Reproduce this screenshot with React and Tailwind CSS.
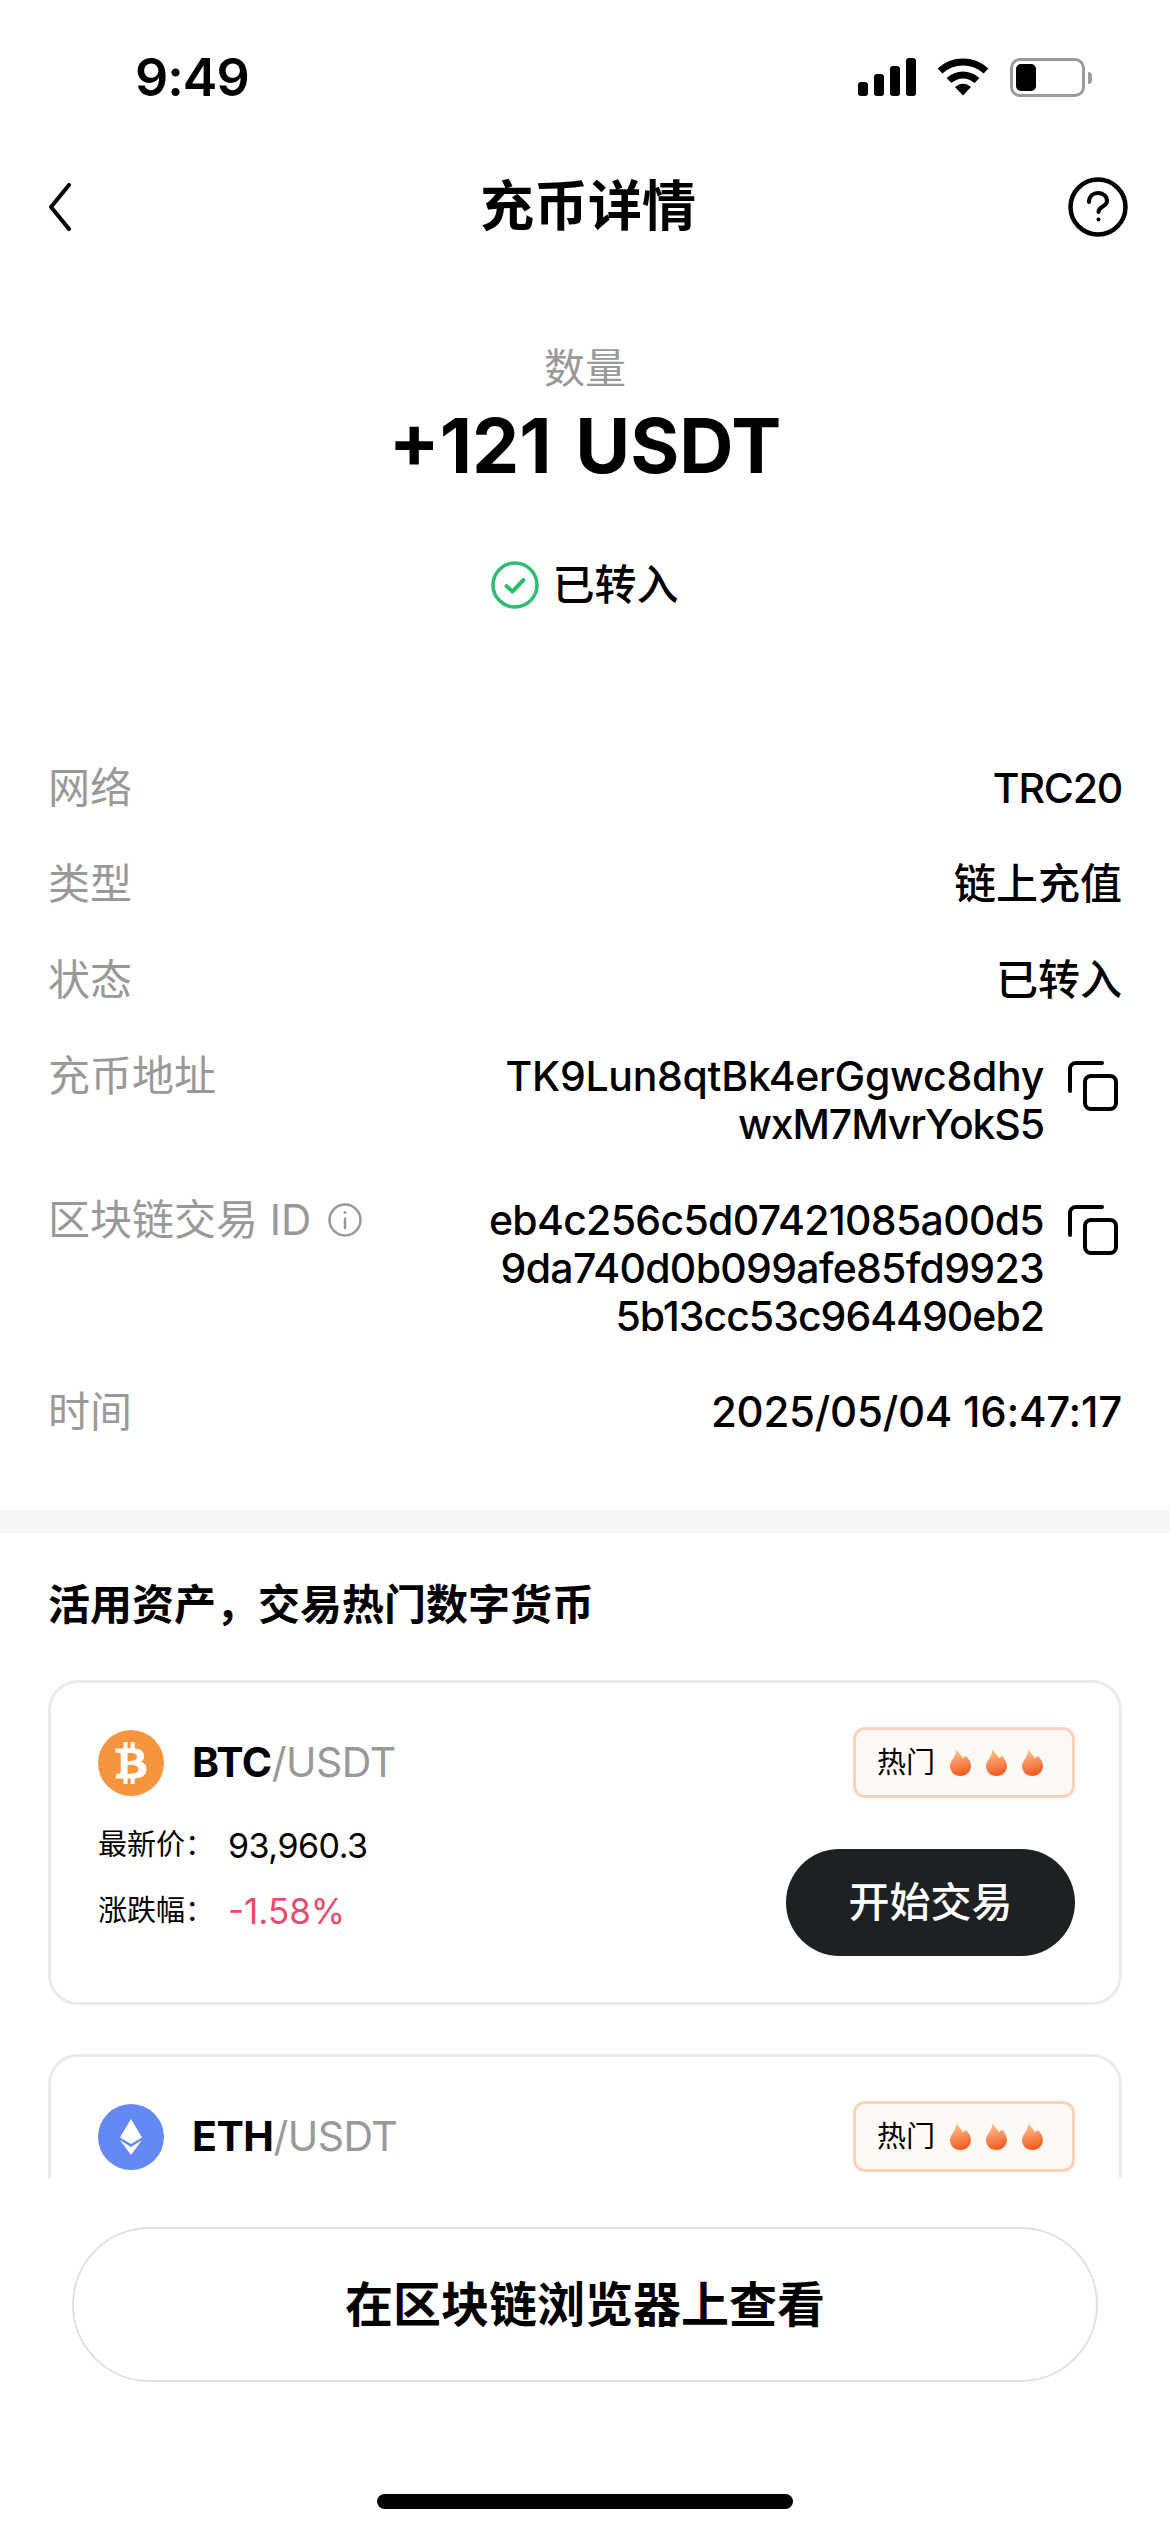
import { FaBtc } from "react-icons/fa";

const SANS = "font-['Inter','Noto_Sans_CJK_SC',sans-serif]";

function StatusBar() {
  return (
    <div className="flex h-[156px] items-start justify-between pt-[52px] pl-[135px] pr-[78px]">
      <span className="text-[52px] font-semibold leading-[52px] tracking-[-1px]">9:49</span>
      <div className="flex items-start pt-[6px]">
        <svg width="60" height="38" viewBox="0 0 60 38" className="mr-[20px]">
          <rect x="1" y="24" width="10" height="14" rx="3" />
          <rect x="17" y="16" width="10" height="22" rx="3" />
          <rect x="33" y="8" width="10" height="30" rx="3" />
          <rect x="49" y="0" width="10" height="38" rx="3" />
        </svg>
        <svg width="52" height="38" viewBox="0 0 52 38" className="mr-[21px]">
          <path d="M3 13 C16 1 36 1 49 13" fill="none" stroke="#000" strokeWidth="7" />
          <path d="M12 22.5 C20 15 32 15 40 22.5" fill="none" stroke="#000" strokeWidth="7" />
          <path d="M18 29 C23 24.500 29 24.500 34 29 L26 37.500 Z" />
        </svg>
        <div className="flex items-center">
          <div className="flex h-[39px] w-[75px] items-center rounded-[10px] border-[3px] border-[#9b9b9b] pl-[3px]">
            <div className="h-[27px] w-[20px] rounded-[5px] bg-black" />
          </div>
          <div className="ml-[3px] h-[12px] w-[4px] rounded-r-full bg-[#9b9b9b]" />
        </div>
      </div>
    </div>
  );
}

function NavBar() {
  return (
    <div className="flex h-[102px] items-center pl-[48px] pr-[42px]">
      <div className="flex-1">
        <svg width="24" height="48" viewBox="0 0 24 48" fill="none" stroke="#000" strokeWidth="4" strokeLinecap="round" strokeLinejoin="round">
          <path d="M21 2 L3 24 L21 46" />
        </svg>
      </div>
      <h1 className="text-[54px] font-bold leading-none">充币详情</h1>
      <div className="flex flex-1 justify-end">
        <svg width="60" height="60" viewBox="0 0 60 60" fill="none" stroke="#000" strokeWidth="4.500" strokeLinecap="round">
          <circle cx="30" cy="30" r="27.500" />
          <path d="M21 25 C21 13 39 13.500 39 24 C39 30 30.500 29 30.500 35" strokeWidth="4" />
          <circle cx="30.500" cy="42.500" r="2" fill="#000" stroke="none" />
        </svg>
      </div>
    </div>
  );
}

function Summary() {
  return (
    <div className="flex flex-col items-center pt-[84px]">
      <div className="text-[41px] leading-[52px] text-[#999999]">数量</div>
      <div className="mt-[12px] text-[75px] font-bold leading-[80px] [word-spacing:6px]">+121 USDT</div>
      <div className="mt-[75px] flex items-center">
        <svg width="48" height="48" viewBox="0 0 48 48" fill="none" stroke="#2dbd6e" strokeWidth="3.500" strokeLinecap="round" strokeLinejoin="round">
          <circle cx="24" cy="24" r="22" />
          <path d="M15.500 25 L21.500 30.500 L32.500 19" strokeWidth="4" />
        </svg>
        <span className="ml-[13px] text-[42px] font-medium leading-[48px]">已转入</span>
      </div>
    </div>
  );
}

function CopyIcon() {
  return (
    <svg width="50" height="50" viewBox="0 0 50 50" fill="none" stroke="#000" strokeWidth="4" strokeLinecap="round" strokeLinejoin="round" className="mt-[9px] mr-[4px] ml-[24px] shrink-0">
      <path d="M34 2 H8 C4.500 2 2 4.500 2 8 V30" />
      <rect x="17" y="15" width="31" height="33" rx="6" />
    </svg>
  );
}

function InfoRow({ label, children }) {
  return (
    <div className="flex items-start justify-between">
      <div className="flex items-center text-[42px] leading-[48px] text-[#999999]">{label}</div>
      <div className="flex items-start text-right text-[42px] font-medium leading-[48px] whitespace-nowrap">{children}</div>
    </div>
  );
}

function Details() {
  return (
    <div className="mt-[155px] flex flex-col gap-[48px] px-[48px]">
      <InfoRow label="网络"><span className="text-[41px] tracking-[-1.2px]">TRC20</span></InfoRow>
      <InfoRow label="类型">链上充值</InfoRow>
      <InfoRow label="状态">已转入</InfoRow>
      <InfoRow label="充币地址">
        <div className="text-[41px] tracking-[-0.3px]">
          <div>TK9Lun8qtBk4erGgwc8dhy</div>
          <div className="tracking-[-1.1px]">wxM7MvrYokS5</div>
        </div>
        <CopyIcon />
      </InfoRow>
      <InfoRow
        label={
          <>
            区块链交易 ID
            <svg width="36" height="36" viewBox="0 0 36 36" fill="none" stroke="#999999" strokeWidth="2.500" strokeLinecap="round" className="ml-[16px]">
              <circle cx="18" cy="18" r="15.500" />
              <path d="M18 16.500 V26" />
              <circle cx="18" cy="10.500" r="1.500" fill="#999999" stroke="none" />
            </svg>
          </>
        }
      >
        <div className="text-[41px] tracking-[-0.7px]">
          <div>eb4c256c5d07421085a00d5</div>
          <div>9da740d0b099afe85fd9923</div>
          <div className="tracking-[-1px]">5b13cc53c964490eb2</div>
        </div>
        <CopyIcon />
      </InfoRow>
      <InfoRow label="时间"><span className="tracking-[-0.25px]">2025/05/04 16:47:17</span></InfoRow>
    </div>
  );
}

function Flame() {
  return (
    <svg width="21" height="27" viewBox="0 0 21 27">
      <defs>
        <linearGradient id="flameFill" x1="0.4" y1="0" x2="0.6" y2="1">
          <stop offset="0" stopColor="#fdc58f" />
          <stop offset="1" stopColor="#f2561f" />
        </linearGradient>
      </defs>
      <path
        d="M6.500 0 C7.500 3 11 5 12.500 9 C13.500 9 15 8 15.500 6.500 C18.500 9.500 21 13 21 17 C21 23 16 27 10.500 27 C4.500 27 0 23 0 17 C0 11.500 6 8.500 6.500 0 Z"
        fill="url(#flameFill)"
      />
    </svg>
  );
}

function HotBadge() {
  return (
    <div className="flex h-[71px] w-[222px] items-center rounded-[12px] border-[3px] border-[#fcd1ba] bg-[#fff9f6] pl-[21px]">
      <span className="mr-[15px] text-[29px] leading-none">热门</span>
      <div className="flex gap-[15px]">
        <Flame />
        <Flame />
        <Flame />
      </div>
    </div>
  );
}

function BtcLogo() {
  return (
    <div className="flex h-[66px] w-[66px] items-center justify-center rounded-full bg-[#f7953f]">
      <FaBtc className="text-[42px] text-white" />
    </div>
  );
}

function EthLogo() {
  return (
    <div className="flex h-[66px] w-[66px] items-center justify-center rounded-full bg-[#6489f5]">
      <svg width="24" height="36" viewBox="0 0 24 36" fill="#fff">
        <path d="M12 0 L23 18.500 L12 25 L1 18.500 Z" />
        <path d="M1 21 L12 28 L23 21 L12 36 Z" />
      </svg>
    </div>
  );
}

function MarketCard({ logo, base, price, change }) {
  return (
    <div className="rounded-[30px] border-[3px] border-[#ebebeb] pt-[44px] pr-[44px] pb-[46px] pl-[47px]">
      <div className="flex items-center justify-between">
        <div className="flex items-center">
          {logo}
          <div className="ml-[28px] text-[41px] leading-none tracking-[-0.5px]">
            <span className="font-bold">{base}</span>
            <span className="text-[#999999]">/USDT</span>
          </div>
        </div>
        <HotBadge />
      </div>
      {price && (
        <div className="flex items-end justify-between">
          <div className="pb-[23px]">
            <div className="flex h-[44px] items-center">
              <span className="w-[130px] text-[29px]">最新价：</span>
              <span className="text-[34px] tracking-[-0.5px]">{price}</span>
            </div>
            <div className="mt-[22px] flex h-[44px] items-center">
              <span className="w-[130px] text-[29px]">涨跌幅：</span>
              <span className="text-[35px] text-[#ea4a6e]">{change}</span>
            </div>
          </div>
          <button className="mt-[51px] h-[107px] w-[289px] rounded-full bg-[#1e2124] text-[41px] font-medium text-white">
            开始交易
          </button>
        </div>
      )}
    </div>
  );
}

export default function App() {
  return (
    <div className={`flex h-[2532px] w-[1170px] flex-col overflow-hidden bg-white text-black ${SANS}`}>
      <div className="h-[2178px] shrink-0 overflow-hidden">
        <StatusBar />
        <NavBar />
        <Summary />
        <Details />
        <div className="mt-[74px] h-[23px] bg-[#f6f6f6]" />
        <div className="px-[48px] pt-[48px]">
          <h2 className="text-[42px] font-bold leading-[48px]">活用资产，交易热门数字货币</h2>
          <div className="mt-[51px] flex flex-col gap-[49px]">
            <MarketCard logo={<BtcLogo />} base="BTC" price="93,960.3" change="-1.58%" />
            <MarketCard logo={<EthLogo />} base="ETH" />
          </div>
        </div>
      </div>
      <div className="flex flex-1 flex-col items-center pt-[49px]">
        <button className="h-[155px] w-[1026px] rounded-full border-2 border-[#e0e0e0] text-[48px] font-bold">
          在区块链浏览器上查看
        </button>
        <div className="mt-[112px] h-[15px] w-[416px] rounded-full bg-black" />
      </div>
    </div>
  );
}
